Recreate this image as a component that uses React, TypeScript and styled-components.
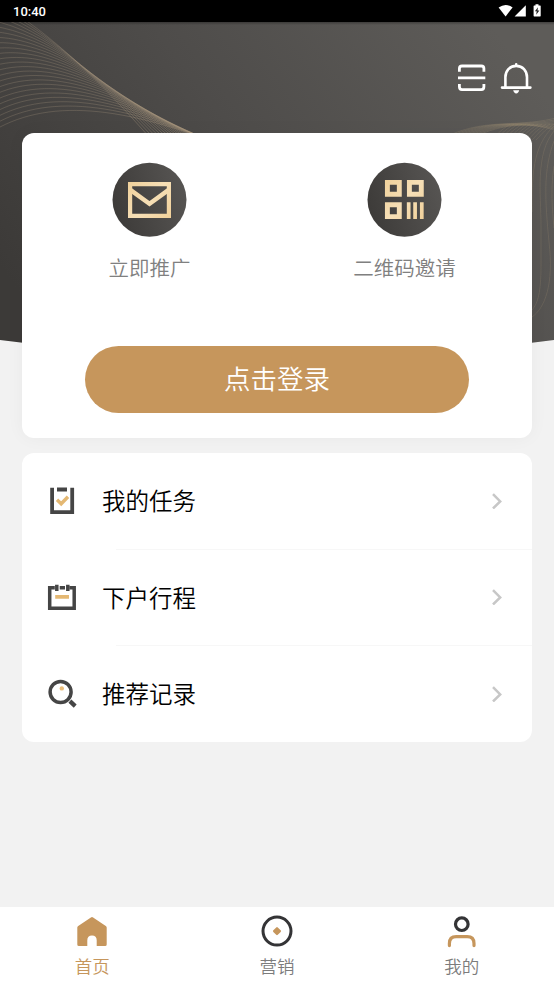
import React from "react";
import styled, { createGlobalStyle } from "styled-components";

const GlobalStyle = createGlobalStyle`
  * { box-sizing: border-box; }
  body { margin: 0; background: #f2f2f2; }
  button { border: 0; padding: 0; background: none; font: inherit; color: inherit; }
  svg { display: block; flex: none; }
`;

const Screen = styled.div`
  width: 554px;
  height: 986px;
  display: flex;
  flex-direction: column;
  overflow: hidden;
  background: #f2f2f2;
  font-family: "Noto Sans CJK SC", sans-serif;
`;

const StatusBar = styled.header`
  height: 22px;
  flex: none;
  display: flex;
  align-items: center;
  justify-content: space-between;
  padding: 0 12px 0 13px;
  background: #000;
  color: #fff;
  font: 500 13px/22px Roboto, sans-serif;
`;

const Clock = styled.span`
  padding-top: 2px;
`;

const Main = styled.main`
  position: relative;
  flex: 1;
  display: flex;
  flex-direction: column;
`;

const Backdrop = styled.svg`
  position: absolute;
  top: 0;
  left: 0;
`;

const Actions = styled.div`
  position: relative;
  height: 111px;
  flex: none;
  display: flex;
  justify-content: flex-end;
  align-items: flex-start;
  gap: 13px;
  padding: 40px 22px 0 0;
`;

const Card = styled.section`
  position: relative;
  flex: none;
  margin: 0 22px;
  background: #fff;
  border-radius: 12px;
`;

const PromoCard = styled(Card)`
  height: 305px;
  padding-top: 29px;
  box-shadow: 0 0 18px rgba(0, 0, 0, 0.045);
`;

const Shortcuts = styled.div`
  display: grid;
  grid-template-columns: 1fr 1fr;
`;

const Shortcut = styled.button`
  display: flex;
  flex-direction: column;
  align-items: center;
  gap: 15px;
  color: #808080;
  font-size: 20.5px;
  font-weight: 350;
  line-height: 30px;
`;

const LoginButton = styled.button`
  display: block;
  width: 384px;
  height: 67px;
  margin: 64px auto 0 63px;
  padding-bottom: 4px;
  border-radius: 34px;
  background: #c6965c;
  color: #fff;
  font-size: 26.5px;
  font-weight: 350;
  line-height: 63px;
`;

const MenuCard = styled(Card)`
  height: 289px;
  margin-top: 15px;
  overflow: hidden;
`;

const MenuRow = styled.div`
  display: flex;
  align-items: center;
  height: 96.5px;
  padding: 0 30px 2px 23px;
`;

const MenuLabel = styled.span`
  flex: 1;
  margin-left: 23px;
  color: #000;
  font-size: 23.5px;
  font-weight: 350;
  line-height: 34px;
`;

const Divider = styled.div`
  height: 1px;
  margin: -1px 0 0 94px;
  background: #f7f7f7;
`;

const TabBar = styled.nav`
  height: 79px;
  flex: none;
  display: grid;
  grid-template-columns: repeat(3, 1fr);
  background: #fff;
`;

const Tab = styled.button<{ $active?: boolean }>`
  display: flex;
  flex-direction: column;
  align-items: center;
  padding-top: 7px;
  gap: 5px;
  color: ${(p) => (p.$active ? "#c6965c" : "#7c7c7c")};
  font-size: 17.5px;
  font-weight: 350;
  line-height: 26px;
`;

type Point = [number, number];
type Cubic = [Point, Point, Point, Point];

// Interpolates two curves; bow lifts the inner control points of the middle strands.
const blend = (a: Cubic, b: Cubic, t: number, bow: number) => {
  const [p0, p1, p2, p3] = a.map((p, i) => {
    const weight = i === 1 ? 1 : i === 2 ? 0.35 : 0;
    const x = p[0] + (b[i][0] - p[0]) * t;
    const y = p[1] + (b[i][1] - p[1]) * t - 4 * t * (1 - t) * bow * weight;
    return `${x.toFixed(2)},${y.toFixed(2)}`;
  });
  return `M${p0} C${p1} ${p2} ${p3}`;
};

const steep: Cubic = [[-10, -24], [42, 4], [92, 50], [150, 116]];
const shallow: Cubic = [[0, 105], [60, 74], [140, 88], [250, 134]];
const ribbonTop: Cubic = [[450, 113], [488, 96], [520, 106], [560, 95]];
const ribbonLow: Cubic = [[478, 113], [510, 100], [535, 101], [560, 110]];

const strands = (n: number, a: Cubic, b: Cubic, bow = 0) =>
  Array.from({ length: n }, (_, i) => <path key={i} d={blend(a, b, i / (n - 1), bow)} />);

const HeroBackdrop = () => (
  <Backdrop width="554" height="326" viewBox="0 0 554 326">
    <defs>
      <linearGradient id="hero" x1="0" y1="0.72" x2="1" y2="0.25">
        <stop offset="0" stopColor="#3c3a38" />
        <stop offset="0.5" stopColor="#4e4c4a" />
        <stop offset="1" stopColor="#5e5c59" />
      </linearGradient>
      <linearGradient id="topShade" x1="0" y1="0" x2="0" y2="1">
        <stop offset="0" stopColor="#000" stopOpacity="0.3" />
        <stop offset="1" stopColor="#000" stopOpacity="0" />
      </linearGradient>
      <linearGradient id="strand" gradientUnits="userSpaceOnUse" x1="0" y1="0" x2="205" y2="0">
        <stop offset="0" stopColor="#a3927b" stopOpacity="0.32" />
        <stop offset="0.5" stopColor="#a3927b" stopOpacity="0.34" />
        <stop offset="1" stopColor="#b5a083" stopOpacity="0.42" />
      </linearGradient>
      <clipPath id="heroShape">
        <path d="M0 0H554V318Q277 354 0 318Z" />
      </clipPath>
    </defs>
    <g clipPath="url(#heroShape)">
      <rect width="554" height="340" fill="url(#hero)" />
      <rect width="554" height="3" fill="url(#topShade)" />
      <g fill="none" stroke="url(#strand)" strokeWidth="0.9">
        {strands(24, steep, shallow, 12)}
      </g>
      <g fill="none" stroke="#a99578" strokeOpacity="0.3" strokeWidth="0.8">
        {strands(9, ribbonTop, ribbonLow)}
      </g>
      <g fill="none" stroke="#a99578" strokeOpacity="0.26" strokeWidth="0.8">
        {Array.from({ length: 12 }, (_, i) => (
          <path key={i} d={`M${492 + i * 4} 118 Q${500 + i * 4} 108 ${510 + i * 4} 102`} />
        ))}
        <path d="M554 104C532 124 532 156 532 190" />
        <path d="M554 109C535 132 541 172 541 204V244C541 270 538 281 532 288" />
        <path d="M554 119C543 148 545 178 549 220C554 262 545 286 532 295" />
        <path d="M554 144C550 170 553 194 554 206" />
      </g>
    </g>
  </Backdrop>
);

const StatusIcons = () => (
  <svg width="44" height="16" viewBox="0 0 44 16" fill="#fff">
    <path d="M.6 4.4Q7.6-.6 14.6 4.4L7.6 13.4Z" />
    <path d="M27.8 2.3V13.6H16.6Z" />
    <path d="M37.5 1.2h3v1.2h1.6q.6 0 .6.6v9.8q0 .6-.6.6h-5.9q-.6 0-.6-.6V3q0-.6.6-.6h1.3Z" />
    <path d="M40 4.2L36.9 8.3h1.8l-.5 3.4 3.2-4.2h-1.9Z" fill="#222" />
  </svg>
);

const ScanIcon = () => (
  <svg width="30" height="32" viewBox="0 0 30 32" fill="none" stroke="#fff" strokeWidth="2.8">
    <path d="M2.4 9.8V6.6Q2.4 4 5 4H24.3Q26.9 4 26.9 6.6V9.8M2.4 22V24.8Q2.4 27.6 5 27.6H24.3Q26.9 27.6 26.9 24.8V22M1 15.9H28.3" />
  </svg>
);

const BellIcon = () => (
  <svg width="32" height="32" viewBox="0 0 32 32" fill="none" stroke="#fff" strokeWidth="2.6" strokeLinecap="round">
    <path d="M5.4 25V15.2C5.4 8.6 9.8 3.9 16.2 3.9S27 8.6 27 15.2V25M2 25.6H30.4M16.2 2.4V3.5" />
    <path d="M13.2 28.3H19.2Q18.5 31.4 16.2 31.4T13.2 28.3Z" fill="#fff" stroke="none" />
  </svg>
);

const Medallion = ({ id, children }: { id: string; children: React.ReactNode }) => (
  <svg width="75" height="75" viewBox="0 0 75 75">
    <defs>
      <linearGradient id={`${id}-disc`} x1="0" y1="0.6" x2="1" y2="0.3">
        <stop offset="0" stopColor="#3d3b39" />
        <stop offset="1" stopColor="#575553" />
      </linearGradient>
      <linearGradient id={`${id}-gold`} gradientUnits="userSpaceOnUse" x1="15" y1="20" x2="60" y2="58">
        <stop offset="0" stopColor="#efd09a" />
        <stop offset="0.5" stopColor="#f6dfb6" />
        <stop offset="1" stopColor="#f0cf97" />
      </linearGradient>
    </defs>
    <circle cx="37.5" cy="37.7" r="37" fill={`url(#${id}-disc)`} />
    <g fill="none" stroke={`url(#${id}-gold)`}>{children}</g>
  </svg>
);

const Chevron = () => (
  <svg width="10" height="17" viewBox="0 0 10 17" fill="none" stroke="#c7c7c7" strokeWidth="2.5">
    <path d="M1 2.1L8.2 9.4 1 16.5" />
  </svg>
);

const TaskIcon = () => (
  <svg width="34" height="34" viewBox="0 0 34 34" fill="none" stroke="#454545" strokeWidth="3.8">
    <path d="M7.1 4.7V29.2H27.2V4.7M12 6.5H22" />
    <path d="M12 16.8L16.2 20.8 23 13.7" stroke="#e4b873" strokeWidth="3.4" />
  </svg>
);

const TripIcon = () => (
  <svg width="34" height="34" viewBox="0 0 34 34" fill="none" stroke="#454545" strokeWidth="3.5">
    <path d="M9.8 7.7H4.7V28.3H29.2V7.7H24.7M14.7 7.7H20M11.8 4.7V11M22.8 4.7V11" />
    <path d="M10.2 16.9H24" stroke="#e4b873" strokeWidth="3.8" />
  </svg>
);

const RecordIcon = () => (
  <svg width="34" height="34" viewBox="0 0 34 34" fill="none" stroke="#454545">
    <circle cx="15.6" cy="16" r="10.5" strokeWidth="3.5" />
    <path d="M24.9 25.1L30.2 30.1" strokeWidth="4.2" />
    <circle cx="16.8" cy="12.4" r="2.2" fill="#e9bc79" stroke="none" />
  </svg>
);

const HomeIcon = () => (
  <svg width="34" height="34" viewBox="0 0 34 34">
    <path
      d="M15.9 3.5Q17 2.7 18.1 3.5L30.8 12Q31.7 12.6 31.7 13.6V30.4Q31.7 32 30.1 32H21.7V26.2Q21.7 21.4 17 21.4T12.3 26.2V32H3.9Q2.3 32 2.3 30.4V13.6Q2.3 12.6 3.2 12Z"
      fill="#c6965c"
    />
  </svg>
);

const MarketIcon = () => (
  <svg width="34" height="34" viewBox="0 0 34 34">
    <circle cx="17" cy="17.1" r="14" fill="none" stroke="#343436" strokeWidth="3" />
    <path d="M17 14.2L19.9 17.1 17 20 14.1 17.1Z" fill="#c6965c" stroke="#c6965c" strokeWidth="2.2" strokeLinejoin="round" />
  </svg>
);

const ProfileIcon = () => (
  <svg width="34" height="34" viewBox="0 0 34 34" fill="none" strokeWidth="3.2">
    <circle cx="16.8" cy="10.2" r="6.3" stroke="#343436" />
    <path d="M4.4 31.6V29.5Q4.4 22.7 11.2 22.7H22.2Q29 22.7 29 29.5V31.6" stroke="#c6965c" strokeLinecap="round" />
  </svg>
);

const menu = [
  { label: "我的任务", Icon: TaskIcon },
  { label: "下户行程", Icon: TripIcon },
  { label: "推荐记录", Icon: RecordIcon },
];

const tabs = [
  { label: "首页", Icon: HomeIcon, active: true },
  { label: "营销", Icon: MarketIcon },
  { label: "我的", Icon: ProfileIcon },
];

export default function App() {
  return (
    <>
      <GlobalStyle />
      <Screen>
        <StatusBar>
          <Clock>10:40</Clock>
          <StatusIcons />
        </StatusBar>
        <Main>
          <HeroBackdrop />
          <Actions>
            <ScanIcon />
            <BellIcon />
          </Actions>
          <PromoCard>
            <Shortcuts>
              <Shortcut>
                <Medallion id="mail">
                  <path d="M18.1 22.1H56.9V53.9H18.1Z" strokeWidth="4.2" />
                  <path d="M18 27.6L37.5 41.8 57 27.6" strokeWidth="4.4" />
                </Medallion>
                立即推广
              </Shortcut>
              <Shortcut>
                <Medallion id="qr">
                  <path d="M20.4 20.4H32.3V32.3H20.4ZM42.4 20.4H54.3V32.3H42.4ZM20.4 42.7H32.3V54.6H20.4Z" strokeWidth="4.9" />
                  <path d="M41.7 40.3V57M48.1 40.3V57M54.8 40.3V57" strokeWidth="3.7" />
                </Medallion>
                二维码邀请
              </Shortcut>
            </Shortcuts>
            <LoginButton>点击登录</LoginButton>
          </PromoCard>
          <MenuCard>
            {menu.map(({ label, Icon }, i) => (
              <React.Fragment key={label}>
                {i > 0 && <Divider />}
                <MenuRow>
                  <Icon />
                  <MenuLabel>{label}</MenuLabel>
                  <Chevron />
                </MenuRow>
              </React.Fragment>
            ))}
          </MenuCard>
        </Main>
        <TabBar>
          {tabs.map(({ label, Icon, active }) => (
            <Tab key={label} $active={active}>
              <Icon />
              {label}
            </Tab>
          ))}
        </TabBar>
      </Screen>
    </>
  );
}
